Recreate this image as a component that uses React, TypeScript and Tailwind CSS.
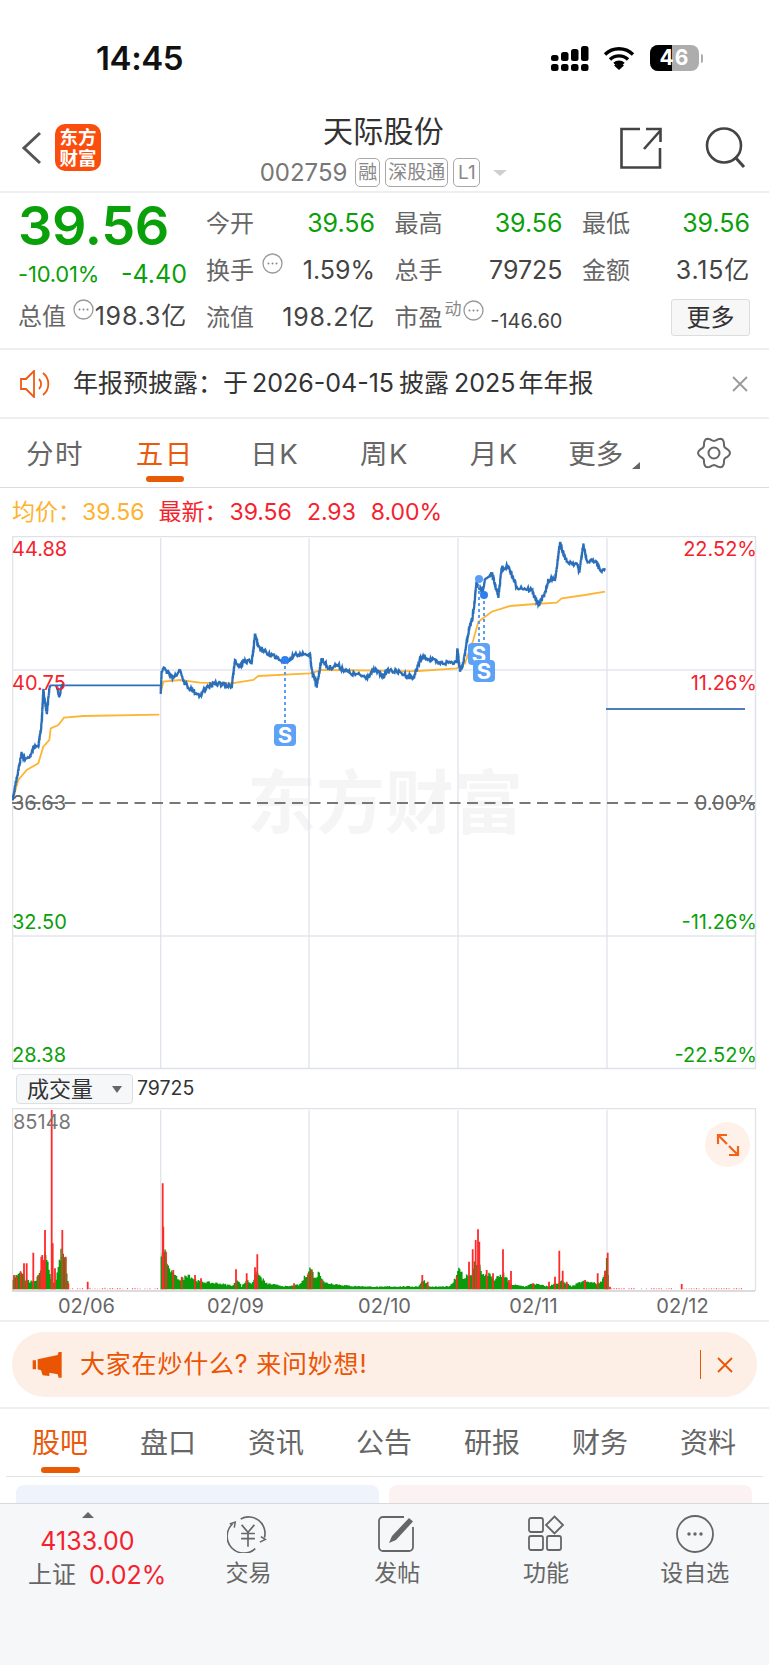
import React from "react";

// seeded noise so the chart is the same on every load
let seed = 7;
const rnd = () => {
  seed = (seed * 16807) % 2147483647;
  return seed / 2147483647;
};

type Pt = [number, number];
const z3 = (p: number[][]): Pt[] => p.map(([x, y]) => [x / 3, 530 + y / 3]);
const z4 = (p: number[][]): Pt[] => p.map(([x, y]) => [385 + x / 3, 530 + y / 3]);
const line = (p: Pt[]) => p.map(([x, y]) => `${x.toFixed(1)},${y.toFixed(1)}`).join(" ");

const jag = (pts: Pt[], amp = 2.6, step = 0.9) => {
  const out: Pt[] = [];
  for (let i = 0; i < pts.length - 1; i++) {
    const [x0, y0] = pts[i];
    const [x1, y1] = pts[i + 1];
    const n = Math.max(1, Math.round(Math.hypot(x1 - x0, y1 - y0) / step));
    for (let k = 0; k < n; k++) {
      const t = k / n;
      out.push([x0 + (x1 - x0) * t, y0 + (y1 - y0) * t + (k === 0 ? 0 : (rnd() - 0.5) * amp * 2)]);
    }
  }
  out.push(pts[pts.length - 1]);
  return out;
};

const priceDay1 = jag(
  z3([[38, 810], [45, 770], [55, 720], [65, 670], [75, 690], [90, 680], [100, 650], [115, 650], [125, 580], [130, 480], [140, 550], [148, 480], [150, 466]]),
);
const priceDay1b = jag(z3([[170, 468], [178, 500], [185, 472], [190, 468]]), 1.5);
const priceRest = jag([
  ...z3([[482, 490], [485, 425], [495, 415], [510, 440], [520, 440], [540, 420], [555, 460], [575, 480], [600, 495], [620, 470], [655, 460], [695, 470], [705, 390], [720, 410], [735, 390], [755, 400], [765, 315], [775, 350], [800, 370], [830, 380], [855, 395], [880, 380], [900, 370], [922, 375], [930, 370], [935, 420], [950, 470], [965, 385], [985, 415], [1010, 405], [1050, 430], [1100, 440], [1125, 420], [1150, 440]]),
  ...z4([[0, 430], [15, 420], [50, 430], [85, 445], [105, 390], [120, 380], [160, 400], [215, 395], [217, 355], [225, 425], [235, 400], [250, 310], [265, 250], [275, 155], [290, 190], [300, 150], [320, 130], [340, 200], [350, 115], [370, 110], [395, 170], [440, 180], [460, 225], [480, 190], [490, 150], [510, 150], [525, 40], [545, 95], [575, 100], [583, 125], [595, 45], [605, 90], [635, 95], [645, 120], [660, 115]]),
]);
const avgDay1 = z3([[38, 810], [55, 750], [80, 720], [115, 700], [130, 650], [148, 630], [152, 595], [175, 585], [192, 563], [250, 558], [478, 554]]);
const avgRest = [
  ...z3([[482, 490], [490, 455], [540, 450], [600, 458], [695, 460], [760, 450], [775, 438], [930, 430], [965, 420], [1150, 422]]),
  ...z4([[0, 425], [100, 423], [215, 415], [240, 400], [265, 330], [280, 275], [320, 245], [375, 228], [450, 222], [515, 218], [530, 205], [600, 195], [660, 185]]),
];

// volume: [x, top] in zoomed coords, base at 688
const BASE = 1060 + 688 / 3;
function z3v(p: number[][]): Pt[] {
  return p.map(([x, y]) => [x / 3, 1060 + y / 3]);
}
function z4v(p: number[][]): Pt[] {
  return p.map(([x, y]) => [385 + x / 3, 1060 + y / 3]);
}
const greenKeys: Pt[] = z3v([[40, 650], [45, 645], [55, 640], [62, 630], [75, 650], [90, 660], [105, 660], [125, 610], [137, 565], [150, 640], [165, 670], [183, 562], [190, 575], [197, 590], [206, 684]]);
const greenKeys2: Pt[] = [
  ...z3v([[484, 585], [492, 548], [498, 572], [505, 610], [520, 640], [545, 655], [565, 635], [580, 650], [595, 660], [660, 668], [700, 675], [712, 650], [725, 678], [740, 655], [755, 668], [770, 630], [800, 668], [860, 678], [900, 672], [932, 612], [945, 650], [958, 627], [975, 665], [1050, 676], [1155, 680]]),
  ...z4v([[0, 678], [100, 678], [115, 655], [135, 679], [195, 678], [215, 645], [224, 604], [235, 655], [248, 635], [258, 640], [268, 600], [285, 595], [292, 640], [315, 635], [326, 655], [356, 635], [375, 670], [420, 678], [445, 668], [490, 678], [530, 660], [560, 678], [585, 664], [598, 660], [640, 668], [655, 650], [666, 583], [672, 684]]),
];
const redSpikes: Pt[] = [
  ...z3v([[42, 645], [50, 650], [62, 635], [72, 610], [80, 610], [100, 578], [115, 645], [124, 590], [127, 585], [130, 600], [135, 510], [155, 150], [158, 550], [165, 625], [187, 510], [197, 590], [205, 670], [263, 665], [488, 370], [490, 500], [498, 575], [520, 630], [545, 650], [585, 645], [603, 655], [708, 628], [740, 640], [765, 622], [772, 583], [882, 670], [925, 640], [935, 630], [965, 660]]),
  ...z4v([[112, 645], [128, 665], [215, 650], [252, 605], [263, 568], [272, 540], [279, 508], [283, 545], [305, 630], [324, 640], [354, 568], [378, 633], [372, 660], [445, 670], [492, 665], [510, 650], [523, 572], [533, 632], [545, 665], [600, 660], [638, 640], [660, 632], [668, 578], [675, 680], [890, 672]]),
];
const bars = (keys: Pt[]) => {
  let d = "";
  for (let i = 0; i < keys.length - 1; i++) {
    const [x0, y0] = keys[i];
    const [x1, y1] = keys[i + 1];
    for (let x = x0; x < x1; x += 1.1) {
      const top = y0 + ((y1 - y0) * (x - x0)) / (x1 - x0);
      const h = (BASE - top) * (0.7 + rnd() * 0.3);
      d += `M${x.toFixed(1)} ${BASE.toFixed(1)}V${(BASE - h).toFixed(1)}`;
    }
  }
  return d;
};
const tiny = (from: number, to: number) => {
  let d = "";
  for (let x = from; x < to; x += 2.5) {
    if (rnd() > 0.3) d += `M${x.toFixed(1)} ${BASE.toFixed(1)}v-${(0.5 + rnd()).toFixed(1)}`;
  }
  return d;
};
const greenPath = bars(greenKeys) + bars(greenKeys2);
const tinyPath = tiny(70, 160) + tiny(609, 745);
const redPath = redSpikes.map(([x, y]) => `M${x.toFixed(1)} ${BASE.toFixed(1)}V${y.toFixed(1)}`).join("");

const gearPts = Array.from({ length: 120 }, (_, i) => {
  const a = (i / 120) * Math.PI * 2;
  const r = 14 + 1.9 * Math.cos(6 * a);
  return [18 + r * Math.cos(a), 18 + r * Math.sin(a)] as Pt;
});

const GREEN = "text-[#0aa00a]";

const Info = ({ className = "" }: { className?: string }) => (
  <svg width="21" height="21" viewBox="0 0 21 21" className={className}>
    <circle cx="10.5" cy="10.5" r="9.5" fill="none" stroke="#999" strokeWidth="1.3" />
    <circle cx="6.5" cy="10.5" r="1" fill="#888" />
    <circle cx="10.5" cy="10.5" r="1" fill="#888" />
    <circle cx="14.5" cy="10.5" r="1" fill="#888" />
  </svg>
);

const Cell = ({ label, value, color, info }: { label: string; value: string; color: string; info?: boolean }) => (
  <div className="flex items-center justify-between">
    <div className="flex items-center">
      <span className="text-[24px] text-[#666]">{label}</span>
      {info && <Info className="ml-[8px] -mt-[15px]" />}
    </div>
    <span className={`text-[25px] ${value.includes("亿") ? "tracking-[0.8px]" : ""} ${color}`}>{value}</span>
  </div>
);

const Tag = ({ children, className = "" }: { children: React.ReactNode; className?: string }) => (
  <span className={`flex h-[29px] items-center justify-center rounded-[5px] border border-[#a8a8a8] text-[19px] leading-none text-[#888] ${className}`}>
    {children}
  </span>
);

const SMark = ({ x, y }: { x: number; y: number }) => (
  <g>
    <rect x={x} y={y} width="22" height="22" rx="4" fill="#5ea2f8" />
    <text x={x + 11} y={y + 18.5} textAnchor="middle" fontSize="22" fontWeight="700" fill="#fff" fontFamily="Inter, sans-serif">
      S
    </text>
  </g>
);

const chartTabs = ["分时", "五日", "日K", "周K", "月K"];
const lowerTabs = ["股吧", "盘口", "资讯", "公告", "研报", "财务", "资料"];

export default function App() {
  return (
    <div className="h-[1665px] w-[769px] overflow-hidden bg-white font-['Inter','Noto_Sans_CJK_SC',sans-serif] text-[#333]">
      {/* status bar */}
      <div className="flex h-[108px] items-start justify-between pl-[96px] pr-[66px] pt-[40px]">
        <span className="text-[33px] font-semibold leading-[36px] tracking-[-0.4px] text-[#111]">14:45</span>
        <div className="mt-[3px] flex items-center">
          <svg width="48" height="28" viewBox="0 0 48 28" className="mr-[4px] mt-[2px]">
            <g fill="#000">
              <rect x="0" y="10" width="7.5" height="6" rx="2.5" />
              <rect x="10" y="7" width="7.5" height="9" rx="2.5" />
              <rect x="20" y="4" width="7.5" height="12" rx="2.5" />
              <rect x="30" y="1" width="7.5" height="15" rx="2.5" />
              <rect x="0" y="19" width="7.5" height="7" rx="2.5" />
              <rect x="10" y="19" width="7.5" height="7" rx="2.5" />
              <rect x="20" y="19" width="7.5" height="7" rx="2.5" />
              <rect x="30" y="19" width="7.5" height="7" rx="2.5" />
            </g>
          </svg>
          <svg width="32" height="24" viewBox="0 0 32 24" className="mr-[15px]">
            <path d="M2 8.5a20 20 0 0 1 28 0M7 13.5a13 13 0 0 1 18 0M11.5 18a6.5 6.5 0 0 1 9 0" fill="none" stroke="#000" strokeWidth="3.4" />
            <path d="M11 19.5l5-2.5 5 2.5-5 4.5z" fill="#000" />
          </svg>
          <div className="relative flex h-[26px] w-[49px] overflow-hidden rounded-[8px] bg-[#adadad]">
            <div className="h-full w-[22px] bg-black" />
            <span className="absolute inset-0 text-center text-[21px] font-bold leading-[26px] tracking-[1px] text-white">46</span>
          </div>
          <div className="ml-[2px] h-[9px] w-[2px] rounded-r bg-[#adadad]" />
        </div>
      </div>

      {/* header */}
      <div className="flex h-[85px] border-b-2 border-[#eeeeee]">
        <div className="flex flex-1 items-start pl-[21px] pt-[16px]">
          <svg width="21" height="34" viewBox="0 0 21 34" className="mr-[13px] mt-[7px]">
            <path d="M19 2L3 17l16 15" fill="none" stroke="#555" strokeWidth="3" />
          </svg>
          <div className="flex h-[47px] w-[46px] flex-col items-center justify-center rounded-[10px] bg-[#fb4e0d] text-[18.5px] font-bold leading-[21px] text-white">
            <span>东方</span>
            <span>财富</span>
          </div>
        </div>
        <div className="flex flex-col items-center pt-[7px]">
          <span className="text-[30px] leading-[32px] tracking-[0.3px] text-[#333]">天际股份</span>
          <div className="mt-[11px] flex items-center">
            <span className="mr-[8px] text-[24px] leading-none text-[#777]">002759</span>
            <Tag className="mr-[5px] w-[25px]">融</Tag>
            <Tag className="mr-[5px] w-[63px]">深股通</Tag>
            <Tag className="w-[27px]">L1</Tag>
            <svg width="14" height="6" viewBox="0 0 14 6" className="ml-[13px]">
              <path d="M0 0h14L7 6z" fill="#cfcfcf" />
            </svg>
          </div>
        </div>
        <div className="flex flex-1 items-start justify-end pr-[23px] pt-[19px]">
          <svg width="42" height="42" viewBox="0 0 42 42" className="mr-[43px]">
            <path d="M20 2H1.5v38.500H40V21M24 22L40 4M26 2h14.500v13" fill="none" stroke="#444" strokeWidth="2.600" />
          </svg>
          <svg width="41" height="41" viewBox="0 0 41 41">
            <circle cx="19" cy="18.500" r="17" fill="none" stroke="#444" strokeWidth="2.600" />
            <path d="M30 30l9 10" fill="none" stroke="#444" strokeWidth="3" />
          </svg>
        </div>
      </div>

      {/* quote */}
      <div className="flex h-[157px] border-b-2 border-[#eeeeee] pl-[18px] pt-[7px]">
        <div className="mr-[19px] w-[169px]">
          <div className={`h-[52px] text-[54px] font-semibold leading-[52px] tracking-[-0.3px] ${GREEN}`}>39.56</div>
          <div className="flex h-[45px] items-center justify-between">
            <span className={`text-[22px] tracking-[-0.2px] ${GREEN}`}>-10.01%</span>
            <span className={`text-[25px] ${GREEN}`}>-4.40</span>
          </div>
          <div className="flex h-[40px] items-center justify-between">
            <div className="flex items-center">
              <span className="text-[24px] text-[#666]">总值</span>
              <Info className="ml-[7px] -mt-[15px]" />
            </div>
            <span className="text-[25px] tracking-[0.8px] text-[#444]">198.3亿</span>
          </div>
        </div>
        <div className="grid h-[141px] grid-cols-[169px_168px_168px] grid-rows-3 gap-x-[19.500px]">
          <Cell label="今开" value="39.56" color={GREEN} />
          <Cell label="最高" value="39.56" color={GREEN} />
          <Cell label="最低" value="39.56" color={GREEN} />
          <Cell label="换手" value="1.59%" color="text-[#444]" info />
          <Cell label="总手" value="79725" color="text-[#444]" />
          <Cell label="金额" value="3.15亿" color="text-[#444]" />
          <Cell label="流值" value="198.2亿" color="text-[#444]" />
          <div className="flex items-center justify-between">
            <div className="flex items-center">
              <span className="text-[24px] text-[#666]">市盈</span>
              <span className="ml-[2px] -mt-[16px] text-[17px] leading-none text-[#888]">动</span>
              <Info className="ml-[1px] -mt-[15px]" />
            </div>
            <span className="mt-[6px] text-[20px] text-[#444]">-146.60</span>
          </div>
          <div className="flex items-center justify-end">
            <div className="flex h-[37px] w-[79px] items-center justify-center rounded-[3px] border border-[#dddddd] bg-[#f7f7f8] text-[24px] text-[#333]">更多</div>
          </div>
        </div>
      </div>

      {/* notice */}
      <div className="flex h-[69px] items-center border-b-2 border-[#eeeeee] pl-[20px] pr-[21px]">
        <svg width="33" height="28" viewBox="0 0 33 28" className="mr-[20px]">
          <path d="M1 9h5l8-8v26l-8-8H1zM19 9a7 7 0 0 1 0 10M23 3a14 14 0 0 1 0 22" fill="none" stroke="#ee5a14" strokeWidth="1.800" />
        </svg>
        <div className="flex text-[25px] text-[#333]">
          <span>年报预披露：于</span>
          <span className="ml-[4px]">2026-04-15</span>
          <span className="ml-[5px]">披露</span>
          <span className="ml-[5px]">2025</span>
          <span className="ml-[3px]">年年报</span>
        </div>
        <svg width="16" height="16" viewBox="0 0 16 16" className="ml-auto">
          <path d="M1 1l14 14M15 1L1 15" stroke="#999" strokeWidth="1.800" />
        </svg>
      </div>

      {/* chart tabs */}
      <div className="grid h-[69px] grid-cols-7 border-b border-[#d9dbe0]">
        {chartTabs.map((t, i) => (
          <div key={t} className="flex flex-col items-center pt-[17px]">
            <span className={`text-[27.500px] leading-[36px] tracking-[1.500px] ${i === 1 ? "text-[#ea5a0c]" : "text-[#666]"}`}>{t}</span>
            {i === 1 && <div className="mt-[4px] h-[6px] w-[38px] rounded-full bg-[#e95a04]" />}
          </div>
        ))}
        <div className="flex items-start justify-center pt-[17px]">
          <span className="text-[27.500px] leading-[36px] text-[#666]">更多</span>
          <svg width="8" height="7" viewBox="0 0 8 7" className="ml-[9px] mt-[26px]">
            <path d="M8 0v7H0z" fill="#666" />
          </svg>
        </div>
        <div className="flex items-start justify-center pt-[16px]">
          <svg width="36" height="36" viewBox="0 0 36 36">
            <polygon points={line(gearPts)} fill="none" stroke="#666" strokeWidth="2" />
            <circle cx="18" cy="18" r="5.500" fill="none" stroke="#666" strokeWidth="2" />
          </svg>
        </div>
      </div>

      {/* info line */}
      <div className="flex h-[48px] items-center whitespace-pre pl-[12px] text-[23px] text-[#f5222d]">
        <span className="text-[#fdb32e]">均价：</span>
        <span className="ml-[1px] text-[#fdb32e]">39.56</span>
        <span className="ml-[14px]">最新：</span>
        <span className="ml-[2px]">39.56</span>
        <span className="ml-[15px]">2.93</span>
        <span className="ml-[15px]">8.00%</span>
      </div>

      {/* price chart */}
      <div className="relative mx-[12px] h-[534px] w-[745px] text-[20px] leading-[20px]">
        <span className="absolute left-[235px] top-[234px] whitespace-nowrap text-[69px] font-bold leading-[66px] text-[#f5f5f5]">东方财富</span>
        <svg width="745" height="534" viewBox="12 536 745 534" className="absolute inset-0">
          <rect x="12.500" y="536.500" width="743" height="532" fill="none" stroke="#dfe2e8" strokeWidth="1.500" />
          <path d="M12 670H755M12 936H755" stroke="#e4e6ee" strokeWidth="1.300" />
          <path d="M160.700 538V1068M309 538V1068M458 538V1068M607 538V1068" stroke="#dfe3ec" strokeWidth="1.300" />
          <path d="M12 803H755" stroke="#777" strokeWidth="1.800" strokeDasharray="11 6.500" />
          <polyline points={line(avgDay1)} fill="none" stroke="#fdb535" strokeWidth="1.800" />
          <polyline points={line(avgRest)} fill="none" stroke="#fdb535" strokeWidth="1.800" />
          <polyline points={line(priceDay1)} fill="none" stroke="#2b6fbb" strokeWidth="2.300" />
          <polyline points={line(priceDay1b)} fill="none" stroke="#2b6fbb" strokeWidth="2.300" />
          <path d="M160 685.300H50" stroke="#2b6fbb" strokeWidth="1.800" />
          <polyline points={line(priceRest)} fill="none" stroke="#2b6fbb" strokeWidth="2.300" />
          <path d="M606 709H745" stroke="#4a7fbb" strokeWidth="2.200" />
          <path d="M285 660V724M479 579V645M484 595V662" stroke="#5a9df5" strokeWidth="2" strokeDasharray="3 3" />
          <circle cx="285" cy="660" r="4" fill="#2f80ed" />
          <circle cx="479" cy="579" r="4" fill="#5a9df5" />
          <circle cx="484" cy="595" r="4" fill="#2f80ed" />
          <SMark x={274} y={724} />
          <SMark x={468} y={643} />
          <SMark x={473} y={660} />
        </svg>
        <span className="absolute left-0 top-[3px] text-[#f5222d]">44.88</span>
        <span className="absolute left-0 top-[137px] text-[#f5222d]">40.75</span>
        <span className="absolute left-0 top-[257px] text-[#666]">36.63</span>
        <span className="absolute left-0 top-[376px] text-[#0aa00a]">32.50</span>
        <span className="absolute left-0 top-[509px] text-[#0aa00a]">28.38</span>
        <span className="absolute right-0 top-[3px] text-[#f5222d]">22.52%</span>
        <span className="absolute right-0 top-[137px] text-[#f5222d]">11.26%</span>
        <span className="absolute right-0 top-[257px] text-[#666]">0.00%</span>
        <span className="absolute right-0 top-[376px] text-[#0aa00a]">-11.26%</span>
        <span className="absolute right-0 top-[509px] text-[#0aa00a]">-22.52%</span>
      </div>

      {/* volume selector */}
      <div className="flex h-[38px] items-center pl-[16px]">
        <div className="flex h-[30px] w-[117px] items-center rounded-[4px] border border-[#dddfe3] bg-[#f6f7f9] pl-[10px]">
          <span className="text-[22px] leading-none text-[#333]">成交量</span>
          <svg width="10" height="7" viewBox="0 0 10 7" className="ml-[19px]">
            <path d="M0 0h10L5 7z" fill="#666" />
          </svg>
        </div>
        <span className="ml-[4px] text-[19.500px] text-[#333]">79725</span>
      </div>

      {/* volume chart */}
      <div className="relative mx-[12px] h-[184px] w-[745px]">
        <svg width="745" height="184" viewBox="12 1108 745 184" className="absolute inset-0">
          <path d="M12.500 1291V1108.500H755.500V1291" fill="none" stroke="#e0e2e8" strokeWidth="1.300" />
          <path d="M12 1291H755" stroke="#cfd1d6" strokeWidth="1.500" />
          <path d="M160.700 1110V1290M309 1110V1290M458 1110V1290M607 1110V1290" stroke="#dfe3ec" strokeWidth="1.300" />
          <path d={tinyPath} stroke="#ff6a6a" strokeWidth="1.200" />
          <path d={greenPath} stroke="#0a9a0a" strokeWidth="1.400" />
          <path d={redPath} stroke="#ff2a2a" strokeWidth="1.800" />
        </svg>
        <span className="absolute left-[1px] top-[4px] text-[20px] leading-[20px] text-[#777]">85148</span>
        <div className="absolute left-[693px] top-[14px] flex h-[45px] w-[45px] items-center justify-center rounded-full bg-[#fdf1ea]">
          <svg width="24" height="24" viewBox="0 0 24 24">
            <path d="M2 11V2h9M2 2l9 9M22 13v9h-9M22 22l-9-9" fill="none" stroke="#f4621a" strokeWidth="2.200" />
          </svg>
        </div>
      </div>

      {/* x axis */}
      <div className="grid h-[30px] grid-cols-5 border-b-2 border-[#eeeeee] px-[12px] pb-[2px] text-center text-[20px] leading-[28px] text-[#666]">
        <span>02/06</span>
        <span>02/09</span>
        <span>02/10</span>
        <span>02/11</span>
        <span>02/12</span>
      </div>

      {/* banner */}
      <div className="h-[87px] border-b-2 border-[#eeeeee] px-[12px] pt-[10px]">
        <div className="flex h-[65px] items-center rounded-full bg-[#fdeee6] pl-[19px] pr-[24px]">
          <svg width="32" height="27" viewBox="60 30 96 81" className="mr-[17px]">
            <path d="M65 58h10v27H65zM80 55l60-13 3-9h9v77h-9l-3-10-25-5v10l-20-2-5-15-10-3z" fill="#ea5504" />
          </svg>
          <span className="whitespace-pre text-[25px] tracking-[0.8px] text-[#ea5504]">大家在炒什么? 来问妙想!</span>
          <div className="ml-auto h-[29px] w-[1.500px] bg-[#ea5504]" />
          <svg width="16" height="16" viewBox="0 0 16 16" className="ml-[16px]">
            <path d="M1 1l14 14M15 1L1 15" stroke="#ea5504" strokeWidth="1.800" />
          </svg>
        </div>
      </div>

      {/* lower tabs */}
      <div className="mx-[6px] grid h-[68px] grid-cols-7 border-b border-[#e2e3e7] pr-[1px]">
        {lowerTabs.map((t, i) => (
          <div key={t} className="flex flex-col items-center pt-[16px]">
            <span className={`text-[28px] leading-[36px] ${i === 0 ? "text-[#ea5a0c]" : "text-[#666]"}`}>{t}</span>
            {i === 0 && <div className="mt-[6px] h-[6px] w-[39px] rounded-full bg-[#e95a04]" />}
          </div>
        ))}
      </div>

      {/* cards cut off by the bottom bar */}
      <div className="grid h-[26px] grid-cols-2 gap-x-[10px] overflow-hidden pl-[16px] pr-[17px] pt-[8px]">
        <div className="h-[40px] rounded-t-[8px] bg-[#eff3fb]" />
        <div className="h-[40px] rounded-t-[8px] bg-[#fdf2f2]" />
      </div>

      {/* bottom bar */}
      <div className="flex h-[162px] border-t border-[#d8d9dc] bg-[#f6f7f9]">
        <div className="flex w-[175px] flex-col items-center pt-[8px]">
          <svg width="12" height="6" viewBox="0 0 12 6">
            <path d="M6 0l6 6H0z" fill="#666" />
          </svg>
          <span className="mt-[9px] text-[25px] leading-[28px] text-[#f5222d]">4133.00</span>
          <div className="mt-[5px] flex items-center self-start pl-[28px] leading-[30px]">
            <span className="text-[24px] text-[#666]">上证</span>
            <span className="ml-[13px] text-[25px] text-[#f5222d]">0.02%</span>
          </div>
        </div>
        <div className="-ml-[1px] grid flex-1 grid-cols-4 pt-[10px] text-[23px] leading-[30px] text-[#666]">
          <div className="flex flex-col items-center">
            <svg width="42" height="38" viewBox="0 0 46 40" className="mt-[1px]">
              <path d="M15 3.500A18 18 0 0 1 41 24M31 36A18 18 0 0 1 6 9" fill="none" stroke="#666" strokeWidth="1.800" />
              <path d="M3 9l6-2-1 6M37 23l5 3-6 3" fill="none" stroke="#666" strokeWidth="1.600" />
              <path d="M16 10l7 8 7-8M15.500 19.500h15M15.500 25h15M23 18v16" fill="none" stroke="#666" strokeWidth="1.800" />
            </svg>
            <span className="mt-[5px]">交易</span>
          </div>
          <div className="flex flex-col items-center">
            <svg width="40" height="40" viewBox="0 0 40 40">
              <path d="M27 3H6a4 4 0 0 0-4 4v26a4 4 0 0 0 4 4h26a4 4 0 0 0 4-4V13" fill="none" stroke="#666" strokeWidth="1.800" />
              <path d="M12 29l3-7L32 4l4 3.500L19 26z" fill="#666" />
            </svg>
            <span className="mt-[4px]">发帖</span>
          </div>
          <div className="flex flex-col items-center">
            <svg width="38" height="40" viewBox="0 0 38 40">
              <g fill="none" stroke="#666" strokeWidth="1.800">
                <rect x="2" y="4" width="14" height="14" rx="2" />
                <rect x="2" y="22" width="14" height="14" rx="2" />
                <rect x="20" y="22" width="14" height="14" rx="2" />
                <path d="M27.500 2.500l8.500 8.500-8.500 8.500-8.500-8.500z" />
              </g>
            </svg>
            <span className="mt-[4px]">功能</span>
          </div>
          <div className="flex flex-col items-center">
            <svg width="40" height="40" viewBox="0 0 40 40">
              <circle cx="20" cy="20" r="18" fill="none" stroke="#666" strokeWidth="1.800" />
              <circle cx="14" cy="20" r="1.700" fill="#666" />
              <circle cx="20" cy="20" r="1.700" fill="#666" />
              <circle cx="26" cy="20" r="1.700" fill="#666" />
            </svg>
            <span className="mt-[4px]">设自选</span>
          </div>
        </div>
      </div>
    </div>
  );
}
